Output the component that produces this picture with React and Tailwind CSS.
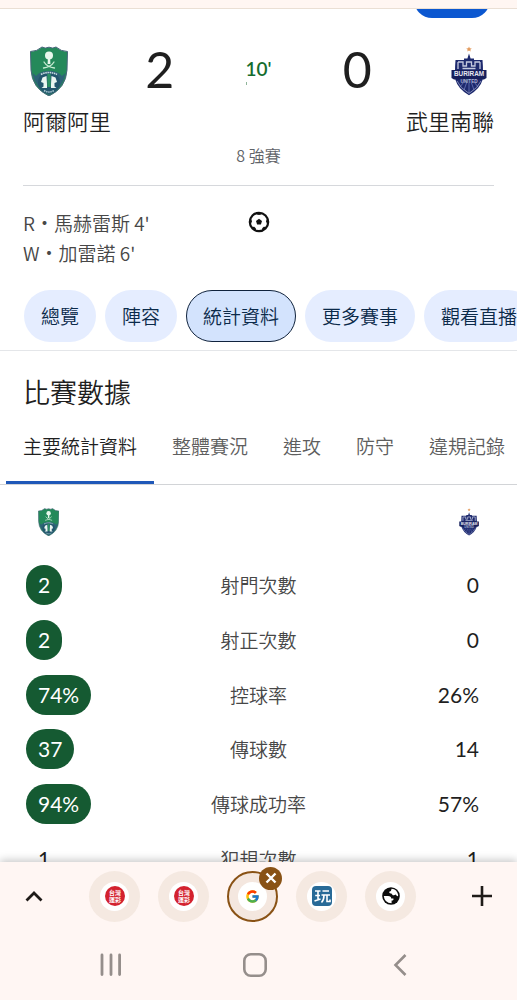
import { FcGoogle } from "react-icons/fc";

const goals = ["R・馬赫雷斯 4'", "W・加雷諾 6'"];

const sections = [
  { label: "總覽" },
  { label: "陣容" },
  { label: "統計資料", active: true },
  { label: "更多賽事" },
  { label: "觀看直播" },
];

const statTabs = ["主要統計資料", "整體賽況", "進攻", "防守", "違規記錄"];

const stats = [
  { label: "射門次數", home: "2", away: "0", lead: true },
  { label: "射正次數", home: "2", away: "0", lead: true },
  { label: "控球率", home: "74%", away: "26%", lead: true },
  { label: "傳球數", home: "37", away: "14", lead: true },
  { label: "傳球成功率", home: "94%", away: "57%", lead: true },
  { label: "犯規次數", home: "1", away: "1" },
];

function AhliCrest({ className }) {
  return (
    <svg viewBox="0 0 38 50" className={className} role="img" aria-label="阿爾阿里">
      <path
        d="M0.5 5.5 Q7 5.5 12 1 Q15 3 19 1.2 Q23 3 26 1 Q31 5.5 37.5 5.5 L37 24 Q36 42 19 50 Q2 42 1 24 Z"
        fill="#24895a"
        stroke="#48657a"
        strokeWidth="1"
      />
      <path d="M2.5 27 L6 30 Q10 25 19 25 Q28 25 32 30 L35.5 27 Q33 42 19 49 Q5 42 2.5 27 Z" fill="#2d6377" />
      <circle cx="19" cy="36.5" r="11" fill="#23566d" />
      <path d="M11 28.5 Q19 24.5 27 28.5" fill="none" stroke="#c9dde0" strokeWidth="1.6" strokeDasharray="1.6 0.6" />
      <circle cx="19" cy="9.5" r="4" fill="#e8f7ec" />
      <path d="M17.9 12 H20.1 L20.4 18 H17.6 Z" fill="#e8f7ec" />
      <path
        d="M14 16 Q17 21 24.5 22 M24 16 Q21 21 13.5 22"
        fill="none"
        stroke="#c8ebd3"
        strokeWidth="1.3"
        strokeLinecap="round"
      />
      <path d="M17.3 28 H20.7 V41 H17.3 Z" fill="#2b9163" />
      <path
        d="M16.5 30 L12.5 31.5 L11 36 L13.5 37 L13.5 40.5 L11.5 42 H17 V38 Z M21.5 30 L25.5 31.5 L27 36 L24.5 37 L24.5 40.5 L26.5 42 H21 V38 Z"
        fill="#eaf6f1"
      />
      <path d="M14 44.5 Q19 47.5 24 44.5" fill="none" stroke="#a9c8cf" strokeWidth="1.5" strokeDasharray="1.5 0.7" />
    </svg>
  );
}

function BuriramCrest({ className }) {
  return (
    <svg viewBox="0 0 36 50" className={className} role="img" aria-label="武里南聯">
      <path
        d="M18 0.4 L18.8 2.2 L20.8 2.4 L19.3 3.7 L19.8 5.6 L18 4.6 L16.2 5.6 L16.7 3.7 L15.2 2.4 L17.2 2.2 Z"
        fill="#e39a5c"
      />
      <path
        d="M18 7.5 L19.6 12.5 H23 V14 H31.5 Q32.5 26 31.5 34 Q29 43 18 49.2 Q7 43 4.5 34 Q3.5 26 4.5 14 H13 V12.5 H16.4 Z"
        fill="#1e2a6e"
      />
      <path
        d="M7 16 H12 V20 H15.5 V16 H20.5 V20 H24 V16 H29 M7 16 V23 M29 16 V23 M11.5 22.5 H24.5"
        fill="none"
        stroke="#c4c9df"
        strokeWidth="1.3"
      />
      <path
        d="M18 37 V47 M15.5 37 L13 44 M20.5 37 L23 44 M12.5 36.5 L9 41 M23.5 36.5 L27 41"
        stroke="#5b68ab"
        strokeWidth="1"
      />
      <path d="M6 35 Q9 42 18 47.4 Q27 42 30 35" fill="none" stroke="#9aa2c8" strokeWidth="0.8" />
      <path d="M0.5 24 H35.5 V32 L33 33.5 H3 L0.5 32 Z" fill="#17205c" />
      <text
        x="18"
        y="30.4"
        textAnchor="middle"
        fontSize="6.4"
        fontWeight="700"
        fill="#e6e8f2"
        fontFamily="'Liberation Sans', sans-serif"
      >
        BURIRAM
      </text>
      <text
        x="18"
        y="36.6"
        textAnchor="middle"
        fontSize="4.6"
        fontWeight="700"
        fill="#b3b9d8"
        fontFamily="'Liberation Sans', sans-serif"
      >
        UNITED
      </text>
    </svg>
  );
}

function BallIcon() {
  return (
    <svg viewBox="0 0 22 22" className="size-[22px]" role="img" aria-label="進球">
      <circle cx="11" cy="11" r="9.2" fill="#fff" stroke="#111" strokeWidth="2.2" />
      <path d="M11 7.8 L14 10 L12.9 13.6 H9.1 L8 10 Z" fill="#111" />
      <path
        d="M8 1.8 H14 L13 3.4 L11 4.1 L9 3.4 Z M1.6 8 L3.3 8.2 L4 10.4 L2.8 13 L1.6 13.5 Z M20.4 8 L18.7 8.2 L18 10.4 L19.2 13 L20.4 13.5 Z M4 16 L6.2 15.8 L7.8 17.2 L8 19.8 L6.5 19.6 Z M18 16 L15.8 15.8 L14.2 17.2 L14 19.8 L15.5 19.6 Z"
        fill="#111"
      />
    </svg>
  );
}

function SportsLotteryIcon() {
  return (
    <svg viewBox="0 0 20 20" className="size-5" aria-hidden="true">
      <circle cx="10" cy="10" r="10" fill="#d3222f" />
      <g fill="#fff" fontSize="6" fontWeight="700" textAnchor="middle" fontFamily="'Noto Sans CJK TC', sans-serif">
        <text x="10" y="8.6">台灣</text>
        <text x="10" y="16">運彩</text>
      </g>
    </svg>
  );
}

function PlayIcon() {
  return (
    <svg viewBox="0 0 20 20" className="size-5" aria-hidden="true">
      <rect width="20" height="20" rx="4" fill="#286a97" />
      <path
        d="M3 5 H8.5 M3.2 9.5 H8 M6 5 V14 M2.5 15 L8.5 13 M10.5 5 H17 M9.5 9 H18 M12 9 Q12 14 9.5 16.5 M15 9 V15.5 H18 V13.5"
        fill="none"
        stroke="#fff"
        strokeWidth="1.6"
      />
    </svg>
  );
}

function GlobeIcon() {
  return (
    <svg viewBox="0 0 18 18" className="size-[18px]" aria-hidden="true">
      <circle cx="9" cy="9" r="8.8" fill="#0c0c0c" />
      <path
        d="M9.6 1.8 Q15 2.4 16.2 8 Q16.2 9.2 15.2 9.2 L13.6 7.6 Q12.4 8.6 10.8 8.2 L9.4 6.4 Q6.8 6.6 7.2 4.8 Q9.4 4.6 9.6 1.8 Z"
        fill="#fff"
      />
      <path
        d="M1.8 9 H6 Q9.4 9.2 9.2 11.4 H11.4 Q12 13.4 9.6 13.6 V16.2 Q2.4 16 1.8 9 Z"
        fill="#fff"
      />
    </svg>
  );
}

const pages = [
  { name: "台灣運彩", icon: <SportsLotteryIcon /> },
  { name: "台灣運彩", icon: <SportsLotteryIcon /> },
  { name: "Google", icon: <FcGoogle className="size-[15px]" />, active: true },
  { name: "玩運彩", icon: <PlayIcon /> },
  { name: "網頁", icon: <GlobeIcon /> },
];

function MatchHeader() {
  return (
    <header className="px-[23px] pt-7">
      <div className="grid h-[50px] grid-cols-[51px_1fr_auto_1fr_51px] text-center font-[Lato,sans-serif] leading-[46px] font-normal">
        <AhliCrest className="mx-auto h-[50px]" />
        <span className="text-[50px]">2</span>
        <span className="relative text-[19px] font-semibold text-[#146c2e]">
          10'
          <span className="absolute top-9 left-0 h-[3px] w-px bg-[#8fb59a]" />
        </span>
        <span className="text-[50px]">0</span>
        <BuriramCrest className="mx-auto h-[50px]" />
      </div>
      <div className="mt-2 flex justify-between text-[22px] leading-8">
        <span>阿爾阿里</span>
        <span>武里南聯</span>
      </div>
      <p className="mt-[7px] text-center text-base leading-6 text-[#5f6368]">8 強賽</p>
      <div className="mt-[18px] grid grid-cols-[1fr_auto_1fr] border-t border-[#d6d8dc] pt-[22px]">
        <ul className="text-[19px] leading-[30px] text-[#474747]">
          {goals.map((goal) => (
            <li key={goal}>{goal}</li>
          ))}
        </ul>
        <div className="pt-[3px]">
          <BallIcon />
        </div>
      </div>
    </header>
  );
}

function SectionChips() {
  return (
    <nav className="mt-[22px] flex gap-[9px] overflow-hidden border-b border-[#e4e6e9] pb-2 pl-6">
      {sections.map(({ label, active }) => (
        <button
          key={label}
          type="button"
          className={
            active
              ? "h-[52px] shrink-0 rounded-full border border-[#10233d] bg-[#d3e3fd] px-4 text-[19px] text-[#0b2a4a]"
              : "h-[52px] shrink-0 rounded-full bg-[#e5edff] px-[17px] text-[19px] text-[#0b2a4a]"
          }
        >
          {label}
        </button>
      ))}
    </nav>
  );
}

function StatTabs() {
  return (
    <div role="tablist" className="flex gap-px overflow-hidden border-b border-[#d2d4d7] pl-1.5">
      {statTabs.map((tab, i) => (
        <button
          key={tab}
          type="button"
          role="tab"
          aria-selected={i === 0}
          className={
            i === 0
              ? "shrink-0 border-b-[3px] border-[#1f58b8] px-[17px] pt-5 pb-[21px] text-[19px] leading-7 text-[#1f1f1f]"
              : "shrink-0 border-b-[3px] border-transparent px-[17px] pt-5 pb-[21px] text-[19px] leading-7 text-[#5e5e5e]"
          }
        >
          {tab}
        </button>
      ))}
    </div>
  );
}

function StatTable() {
  return (
    <div className="px-[26px]">
      <div className="flex h-[73px] items-center justify-between px-3">
        <AhliCrest className="h-7" />
        <BuriramCrest className="h-7" />
      </div>
      <table className="h-[328px] w-full table-fixed">
        <tbody>
          {stats.map(({ label, home, away, lead }) => (
            <tr key={label}>
              <td className="font-[Lato,sans-serif] text-[21px] leading-10 font-normal">
                <span className={lead ? "block w-fit rounded-[20px] bg-[#155a32] px-3 text-white" : "block w-fit px-3"}>
                  {home}
                </span>
              </td>
              <th scope="row" className="text-[19px] leading-7 font-[350] text-[#474747]">
                {label}
              </th>
              <td className="pr-3 text-right font-[Lato,sans-serif] text-[21px] leading-10 font-normal">{away}</td>
            </tr>
          ))}
        </tbody>
      </table>
    </div>
  );
}

function TabStrip() {
  return (
    <div className="flex h-[68px] items-center pr-[17px] pl-4">
      <button type="button" aria-label="展開" className="grid size-9 place-items-center">
        <svg viewBox="0 0 18 12" className="h-3 w-[18px]" fill="none" stroke="#1f1b18" strokeWidth="2.8">
          <path d="M1.5 10.5 L9 3 L16.5 10.5" />
        </svg>
      </button>
      <div className="ml-[37px] flex gap-[18px]">
        {pages.map(({ name, icon, active }, i) => (
          <div key={i} className="relative">
            <button
              type="button"
              aria-label={name}
              className={
                active
                  ? "grid size-[51px] place-items-center rounded-full border-2 border-[#895215] bg-[#f4e7df]"
                  : "grid size-[51px] place-items-center rounded-full bg-[#f5e9e1]"
              }
            >
              <span className="grid size-[29px] place-items-center rounded-full bg-white">{icon}</span>
            </button>
            {active && (
              <button
                type="button"
                aria-label="關閉分頁"
                className="absolute -top-1 -right-1 grid size-[23px] place-items-center rounded-full bg-[#895215]"
              >
                <svg viewBox="0 0 12 12" className="size-3" stroke="#fff" strokeWidth="2.4">
                  <path d="M1.5 1.5 L10.5 10.5 M10.5 1.5 L1.5 10.5" />
                </svg>
              </button>
            )}
          </div>
        ))}
      </div>
      <button type="button" aria-label="新增分頁" className="ml-auto grid size-9 place-items-center">
        <svg viewBox="0 0 20 20" className="size-5" stroke="#1f1b18" strokeWidth="2.6">
          <path d="M10 0 V20 M0 10 H20" />
        </svg>
      </button>
    </div>
  );
}

function SystemNav() {
  return (
    <div className="grid h-[70px] grid-cols-3 place-items-center pr-[45px] pl-[39px]">
      <button type="button" aria-label="最近使用">
        <svg viewBox="0 0 22 24" className="h-6 w-[22px]" stroke="#958e8b" strokeWidth="2.8" strokeLinecap="round">
          <path d="M2 2 V21.5 M11 2 V21.5 M19.6 2 V21.5" />
        </svg>
      </button>
      <button type="button" aria-label="主畫面">
        <svg viewBox="0 0 24 24" className="size-6" fill="none" stroke="#958e8b" strokeWidth="2.6">
          <rect x="1.3" y="1.3" width="21.4" height="21.4" rx="6.5" />
        </svg>
      </button>
      <button type="button" aria-label="返回">
        <svg viewBox="0 0 14 24" className="h-6 w-3.5" fill="none" stroke="#958e8b" strokeWidth="2.6">
          <path d="M12.5 2 L2.5 12 L12.5 22" />
        </svg>
      </button>
    </div>
  );
}

export default function App() {
  return (
    <div className="flex h-screen flex-col bg-white font-['Noto_Sans_CJK_TC',sans-serif] font-[350] text-[#1f1f1f]">
      <div className="h-[9px] shrink-0 border-b border-[#eadfd4] bg-[#fff6f2]" />

      <main className="min-h-0 flex-1 overflow-hidden">
        {/* Bottom edge of the sticky action button */}
        <div className="flex h-[9px] items-end justify-end overflow-hidden pr-[27px]">
          <button type="button" aria-label="登入" className="h-9 w-[76px] shrink-0 rounded-full bg-[#0b57d0]" />
        </div>

        <MatchHeader />
        <SectionChips />

        <section>
          <h2 className="mt-[21px] px-[23px] text-[27px] leading-10 font-[350]">比賽數據</h2>
          <StatTabs />
          <StatTable />
        </section>
      </main>

      {/* Browser tab strip and system buttons */}
      <footer className="relative shrink-0 bg-[#fff6f3] shadow-[0_-2px_8px_rgba(0,0,0,0.22)]">
        <TabStrip />
        <SystemNav />
      </footer>
    </div>
  );
}
